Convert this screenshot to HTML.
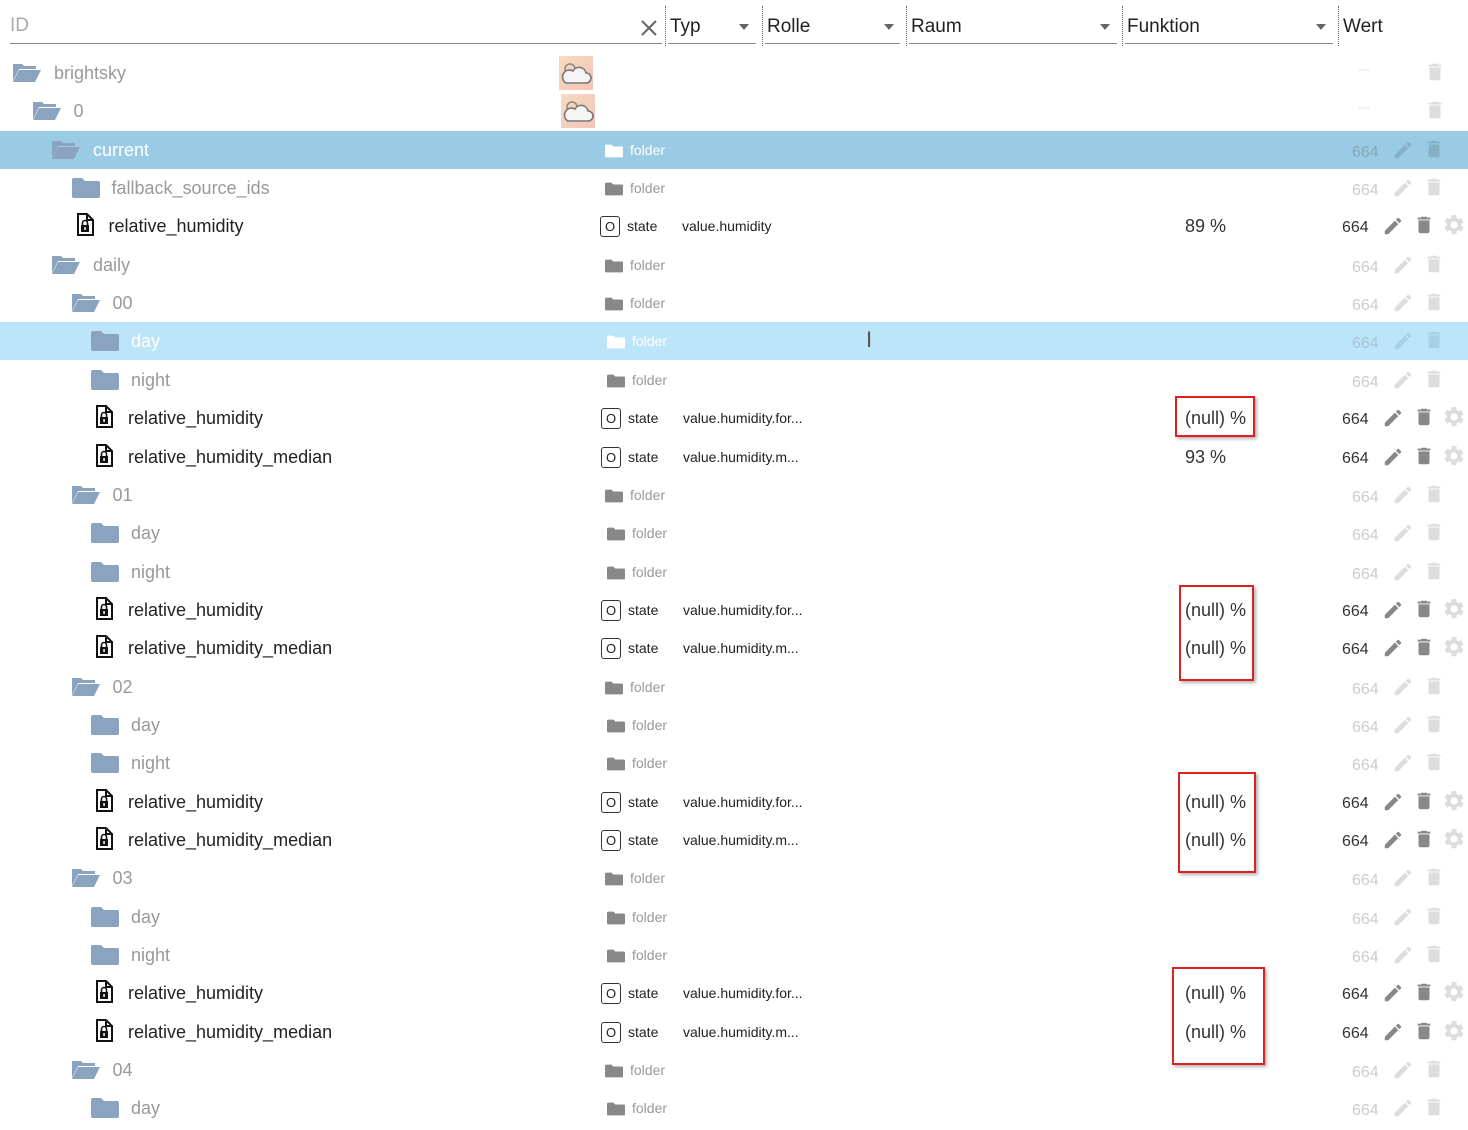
<!DOCTYPE html>
<html><head><meta charset="utf-8"><style>
body{margin:0;width:1468px;height:1130px;background:#fff;font-family:"Liberation Sans",sans-serif;position:relative;overflow:hidden}
.a{position:absolute;white-space:nowrap}
.row{position:absolute;left:0;width:1468px;height:38px}
.nm{position:absolute;font-size:18px;top:9px}
.sm{position:absolute;font-size:14px;top:11px}
.hd{position:absolute;top:16px;font-size:19px;color:#222}
.ul{position:absolute;top:43px;height:1px;background:#888}
.dv{position:absolute;top:6px;height:40px;border-left:1px dotted #666}
.tri{position:absolute;top:24px;width:0;height:0;border-left:5px solid transparent;border-right:5px solid transparent;border-top:6px solid #666}
.red{position:absolute;border:2px solid #e02020;box-shadow:2px 2px 3px rgba(0,0,0,.3)}
</style></head><body>
<div class="a" style="left:10px;top:15px;font-size:19px;color:#aaa">ID</div>
<div class="ul" style="left:10px;width:652px"></div>
<svg class="a" style="left:640px;top:19px" width="18" height="18"><path d="M2 2L16 16M16 2L2 16" stroke="#666" stroke-width="2"/></svg>
<div class="dv" style="left:665px"></div><div class="hd" style="left:670px">Typ</div><div class="tri" style="left:739px"></div><div class="ul" style="left:668px;width:88px"></div>
<div class="dv" style="left:762px"></div><div class="hd" style="left:767px">Rolle</div><div class="tri" style="left:884px"></div><div class="ul" style="left:765px;width:135px"></div>
<div class="dv" style="left:906px"></div><div class="hd" style="left:911px">Raum</div><div class="tri" style="left:1100px"></div><div class="ul" style="left:909px;width:208px"></div>
<div class="dv" style="left:1122px"></div><div class="hd" style="left:1127px">Funktion</div><div class="tri" style="left:1316px"></div><div class="ul" style="left:1125px;width:208px"></div>
<div class="dv" style="left:1338px"></div><div class="hd" style="left:1343px">Wert</div>
<div id="rows"></div>
<div class="red" style="left:1175px;top:396px;width:76px;height:37px"></div>
<div class="red" style="left:1179px;top:585px;width:71px;height:92px"></div>
<div class="red" style="left:1178px;top:772px;width:74px;height:97px"></div>
<div class="red" style="left:1172px;top:967px;width:89px;height:94px"></div>
<script>
var R=[[0,'a','brightsky'],[1,'a','0'],[2,'o','current','sel'],[3,'c','fallback_source_ids'],[3,'f','relative_humidity','value.humidity','89 %'],[2,'o','daily'],[3,'o','00'],[4,'c','day','hov'],[4,'c','night'],[4,'f','relative_humidity','value.humidity.for...','(null) %'],[4,'f','relative_humidity_median','value.humidity.m...','93 %']];
for(var i=1;i<=4;i++){R.push([3,'o','0'+i]);R.push([4,'c','day']);if(i<4){R.push([4,'c','night']);R.push([4,'f','relative_humidity','value.humidity.for...','(null) %']);R.push([4,'f','relative_humidity_median','value.humidity.m...','(null) %']);}}
var openF='<svg width="30" height="22" viewBox="0 0 30 22"><path d="M1 3h9l2 2h12v3H7L1 20z" fill="#8aa3bf"/><path d="M7 9h22l-6 12H1z" fill="#8aa3bf"/></svg>';
var closF='<svg width="28" height="20" viewBox="0 0 28 20"><path d="M0 2q0-2 2-2h8l3 3h13q2 0 2 2v13q0 2-2 2H2q-2 0-2-2z" fill="#8aa3bf"/></svg>';
var fileI='<svg width="18" height="24" viewBox="0 0 18 24"><path d="M2 1h9l6 6v15H2z" fill="#fff" stroke="#111" stroke-width="2"/><path d="M11 1v6h6" fill="none" stroke="#111" stroke-width="2"/><rect x="5" y="12" width="8" height="7" fill="#111"/><path d="M6.5 12v-2a2.5 2.5 0 0 1 5 0v2" fill="none" stroke="#111" stroke-width="1.6"/><rect x="8.3" y="14" width="1.5" height="3" fill="#fff"/></svg>';
var adI='<div style="width:34px;height:34px;background:linear-gradient(135deg,#f6dcc0,#f3c4b8);position:relative"><svg width="34" height="34" viewBox="0 0 34 34"><circle cx="11" cy="13" r="5" fill="none" stroke="#888" stroke-width="1.5"/><path d="M7 27h20a5 5 0 0 0 0-10a7 7 0 0 0-13-2a6 6 0 0 0-7 12z" fill="#f5f5f5" stroke="#777" stroke-width="1.6"/></svg></div>';
var pen=function(c){return '<svg width="22" height="22" viewBox="0 0 24 24"><path d="M3 17.25V21h3.75L17.8 9.94l-3.75-3.75zM20.7 7.04a1 1 0 0 0 0-1.41l-2.34-2.34a1 1 0 0 0-1.41 0l-1.83 1.83 3.75 3.75z" fill="'+c+'"/></svg>'};
var trash=function(c){return '<svg width="22" height="24" viewBox="0 0 24 24"><path d="M6 19a2 2 0 0 0 2 2h8a2 2 0 0 0 2-2V7H6zM19 4h-3.5l-1-1h-5l-1 1H5v2h14z" fill="'+c+'"/></svg>'};
var gear='<svg width="24" height="24" viewBox="0 0 24 24"><path d="M19.14 12.94a7 7 0 0 0 0-1.88l2.03-1.58a.5.5 0 0 0 .12-.61l-1.92-3.32a.5.5 0 0 0-.59-.22l-2.39.96a7 7 0 0 0-1.62-.94l-.36-2.540A.5.5 0 0 0 13.92 2h-3.84a.5.5 0 0 0-.48.41l-.36 2.54a7 7 0 0 0-1.62.94l-2.39-.96a.5.5 0 0 0-.59.22L2.72 8.47a.5.5 0 0 0 .12.61l2.03 1.58a7 7 0 0 0 0 1.88l-2.03 1.58a.5.5 0 0 0-.12.61l1.92 3.32c.12.22.37.29.59.22l2.39-.96c.5.38 1.04.7 1.620.94l.36 2.54c.05.24.25.41.48.41h3.84c.24 0 .44-.17.48-.41l.36-2.54a7 7 0 0 0 1.62-.94l2.39.96c.22.08.47 0 .59-.22l1.92-3.32a.5.5 0 0 0-.12-.61zM12 15.6a3.6 3.6 0 1 1 0-7.2 3.6 3.6 0 0 1 0 7.2z" fill="#ddd"/></svg>';
var h='';
R.forEach(function(r,i){
 var top=Math.round(54+i*38.35),lv=r[0],t=r[1],bg='#fff',col='#999';
 if(r[3]=='sel'){bg='#9acbe4';col='#fff'} if(r[3]=='hov'){bg='#bde5f9';col='#fff'}
 h+='<div class="row" style="top:'+top+'px;background:'+bg+'">';
 var ix=12+lv*19.5;
 if(t=='a'||t=='o'){h+='<div class="a" style="left:'+ix+'px;top:7px">'+openF+'</div><div class="nm" style="left:'+(ix+42)+'px;color:'+col+'">'+r[2]+'</div>';}
 else if(t=='c'){h+='<div class="a" style="left:'+(ix+1)+'px;top:9px">'+closF+'</div><div class="nm" style="left:'+(ix+41)+'px;color:'+col+'">'+r[2]+'</div>';}
 else {h+='<div class="a" style="left:'+(ix+5)+'px;top:6px">'+fileI+'</div><div class="nm" style="left:'+(ix+38)+'px;color:#222">'+r[2]+'</div>';}
 if(t=='a'){h+='<div class="a" style="left:'+(559+(lv?2:0))+'px;top:2px">'+adI+'</div><div class="a" style="left:1358px;top:8px;color:#ddd;font-size:12px">---</div><div class="a" style="left:1424px;top:6px">'+trash('#ddd')+'</div>';}
 else if(t=='f'){var x=lv==3?600:601;
  h+='<div class="a" style="left:'+x+'px;top:9px;width:18px;height:19px;border:1px solid #333;border-radius:3px;font-size:13px;text-align:center;line-height:19px;color:#222">O</div><div class="sm" style="left:'+(x+27)+'px;color:#222">state</div><div class="sm" style="left:'+(x+82)+'px;color:#222">'+r[3]+'</div><div class="nm" style="left:1185px;color:#333">'+r[4]+'</div><div class="sm" style="left:1342px;top:12px;font-size:16px;color:#333">664</div><div class="a" style="left:1382px;top:8px">'+pen('#888')+'</div><div class="a" style="left:1413px;top:6px">'+trash('#888')+'</div><div class="a" style="left:1442px;top:6px">'+gear+'</div>';}
 else {var fc=bg=='#fff'?'#888':'#fff',tc=bg=='#fff'?'#999':'#fff';
  var ic=r[3]=='sel'?'#86b0c6':(r[3]?'#a6d0e4':'#ddd');
  h+='<div class="a" style="left:'+(lv==4?607:605)+'px;top:13px">'+closF.replace('width="28" height="20"','width="18" height="14"').replace('#8aa3bf',fc)+'</div><div class="sm" style="left:'+(lv==4?632:630)+'px;color:'+tc+'">folder</div><div class="sm" style="left:1352px;top:13px;font-size:16px;color:'+(r[3]=='sel'?'#8aa6b6':(r[3]?'#a9c3d3':'#ccc'))+'">664</div><div class="a" style="left:1392px;top:8px">'+pen(ic)+'</div><div class="a" style="left:1423px;top:6px">'+trash(ic)+'</div>';}
 h+='</div>';
});
document.getElementById('rows').innerHTML=h;
</script>
<div class="a" style="left:866px;top:327px;font-size:22px;color:#555">I</div>
</body></html>
